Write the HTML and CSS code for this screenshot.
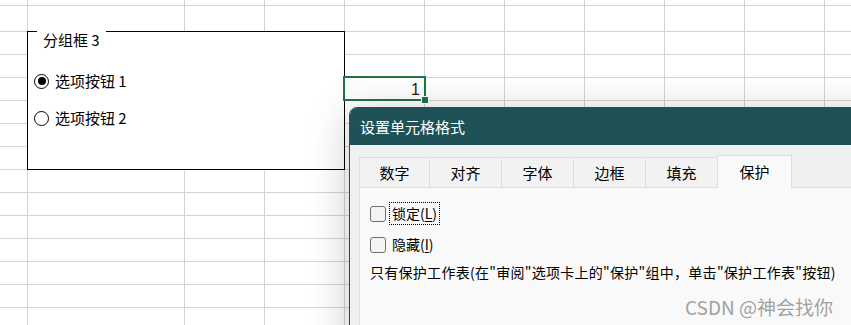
FILE: index.html
```html
<!DOCTYPE html>
<html lang="zh-CN">
<head>
<meta charset="utf-8">
<title>设置单元格格式</title>
<link rel="stylesheet" href="styles.css">
</head>
<body>
<div class="sheet">
  <div class="cols">
    <div class="col c0"></div>
    <div class="col c1"></div>
    <div class="col"></div>
    <div class="col"></div>
    <div class="col"></div>
    <div class="col"></div>
    <div class="col"></div>
    <div class="col"></div>
    <div class="col"></div>
    <div class="col"></div>
    <div class="col"></div>
  </div>

  <div class="groupbox">
    <div class="gb-title">分组框 3</div>
    <div class="radio-row first"><span class="radio checked"></span><span class="radio-label">选项按钮 1</span></div>
    <div class="radio-row"><span class="radio"></span><span class="radio-label">选项按钮 2</span></div>
  </div>

  <div class="selcell"><span class="cell-value">1</span><span class="handle"></span></div>

  <div class="dialog">
    <div class="titlebar">设置单元格格式</div>
    <div class="tabs">
      <div class="tab w70">数字</div>
      <div class="tab">对齐</div>
      <div class="tab">字体</div>
      <div class="tab">边框</div>
      <div class="tab">填充</div>
      <div class="tab active">保护</div>
    </div>
    <div class="panel">
      <div class="check-row"><span class="checkbox"></span><span class="check-label focus">锁定(<u>L</u>)</span></div>
      <div class="check-row second"><span class="checkbox"></span><span class="check-label">隐藏(<u>I</u>)</span></div>
      <p class="note">只有保护工作表(在"审阅"选项卡上的"保护"组中，单击"保护工作表"按钮)</p>
    </div>
  </div>

  <div class="watermark">CSDN @神会找你</div>
</div>
</body>
</html>
```

FILE: styles.css
```css
* { box-sizing: border-box; }
html, body { margin: 0; padding: 0; background: #fff; }
body { font-family: "Noto Sans CJK SC", "Noto Sans", sans-serif; color: #000; }

.sheet {
  position: relative;
  width: 851px;
  height: 325px;
  overflow: hidden;
  background-color: #fff;
  background-image: repeating-linear-gradient(to bottom, transparent 0 22px, #d4d4d4 22px 23px);
  background-position: 0 9px;
}

.cols { display: flex; height: 100%; }
.col { flex: 0 0 80px; border-right: 1px solid #d4d4d4; }
.col.c0 { flex-basis: 28px; }
.col.c1 { flex-basis: 157px; }

/* group box (form control floating over the sheet) */
.groupbox {
  position: absolute;
  left: 27px;
  top: 31px;
  width: 318px;
  height: 139px;
  border: 1px solid #000;
  background: #fff;
}
.gb-title {
  width: max-content;
  margin: -1px 0 0 9px;
  padding: 0 6px;
  background: #fff;
  font-size: 15px;
  line-height: 18px;
}
.radio-row {
  display: flex;
  align-items: center;
  height: 20px;
  padding-left: 6px;
  margin-top: 17px;
}
.radio-row.first { margin-top: 22px; }
.radio {
  position: relative;
  width: 15px;
  height: 15px;
  border: 1px solid #000;
  border-radius: 50%;
  background: #fff;
  margin-right: 6px;
}
.radio.checked::after {
  content: "";
  position: absolute;
  left: 2.5px;
  top: 2.5px;
  width: 8px;
  height: 8px;
  border-radius: 50%;
  background: #000;
}
.radio-label { font-size: 15px; line-height: 20px; }

/* selected cell */
.selcell {
  position: absolute;
  left: 343px;
  top: 76px;
  width: 83px;
  height: 25px;
  border: 2px solid #217346;
  display: flex;
  justify-content: flex-end;
  align-items: flex-end;
  padding-right: 4px;
}
.cell-value {
  font-family: "Liberation Sans", sans-serif;
  font-size: 16px;
  line-height: 19px;
  color: #222;
}
.handle {
  position: absolute;
  right: -5px;
  bottom: -5px;
  width: 8px;
  height: 8px;
  background: #217346;
  border: 1px solid #fff;
}

/* dialog */
.dialog {
  position: absolute;
  left: 349px;
  top: 107px;
  width: 600px;
  height: 300px;
  border: 1px solid #1f5257;
  border-radius: 8px 8px 0 0;
  background: #f0f0f0;
  overflow: hidden;
  box-shadow: 0 6px 40px rgba(0, 0, 0, 0.22);
}
.titlebar {
  height: 37px;
  background: #1f5257;
  color: #fff;
  font-size: 15px;
  line-height: 37px;
  padding-left: 10px;
}
.tabs {
  display: flex;
  align-items: flex-end;
  height: 32px;
  margin-top: 10px;
  padding-left: 9px;
}
.tab {
  width: 73px;
  height: 30px;
  margin-left: -1px;
  border: 1px solid #dedede;
  border-bottom: none;
  background: #f2f2f2;
  font-size: 15px;
  line-height: 29px;
  text-align: center;
}
.tab.w70 { width: 71px; margin-left: 0; }
.tab.active {
  position: relative;
  z-index: 1;
  width: 75px;
  height: 33px;
  margin-bottom: -1px;
  background: #f9f9f9;
  line-height: 32px;
}
.panel {
  margin-left: 9px;
  height: 200px;
  border: 1px solid #dedede;
  background: #f9f9f9;
  padding: 14px 0 0 10px;
}
.check-row {
  display: flex;
  align-items: center;
  height: 23px;
}
.check-row.second { margin-top: 8px; }
.checkbox {
  width: 16px;
  height: 16px;
  border: 1px solid #6e6e6e;
  border-radius: 3px;
  background: #f4f4f4;
  margin-right: 3px;
}
.check-label {
  height: 23px;
  padding: 0 2px;
  border: 1px dotted transparent;
  font-size: 14px;
  line-height: 21px;
}
.check-label.focus { border-color: #000; }
.check-label u { text-underline-offset: 2px; }
.note {
  margin: 6px 0 0;
  font-size: 14px;
  line-height: 20px;
  letter-spacing: 0.28px;
  white-space: nowrap;
}

.watermark {
  position: absolute;
  left: 685px;
  top: 294px;
  font-size: 19px;
  line-height: 25px;
  color: rgba(130, 130, 130, 0.75);
  white-space: nowrap;
}
```
